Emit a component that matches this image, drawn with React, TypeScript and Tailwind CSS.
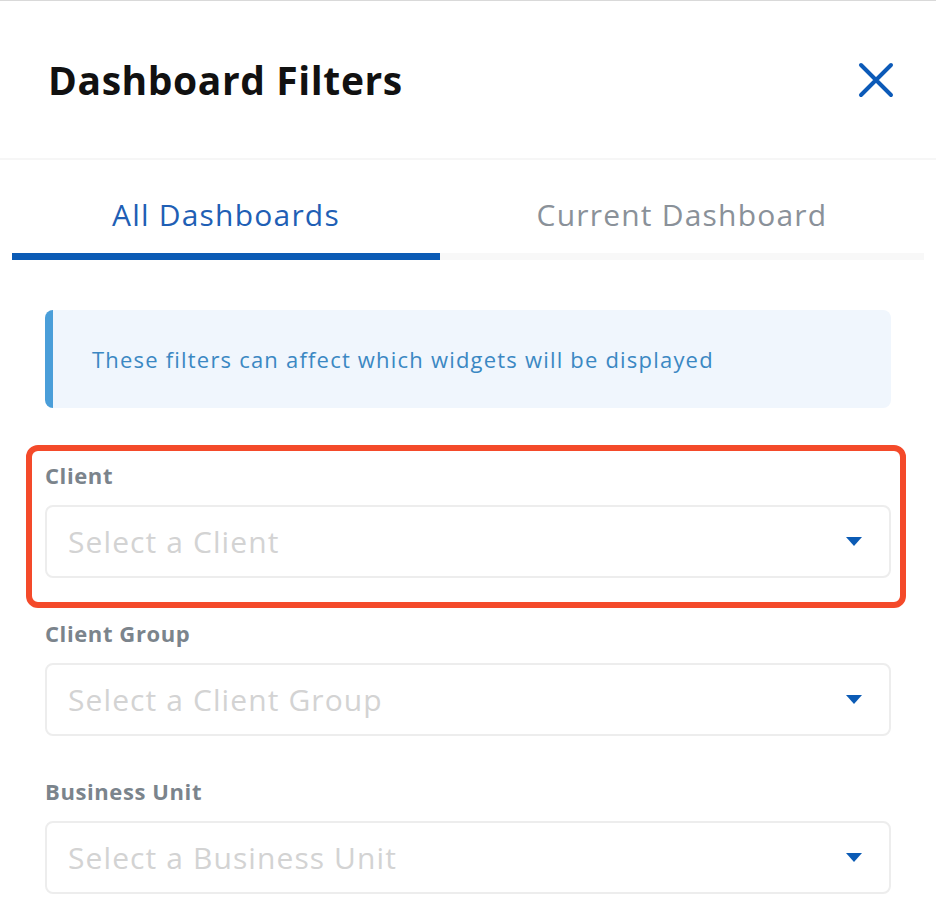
import { useState } from "react";

type Field = { label: string; placeholder: string; highlighted?: boolean };

const fields: Field[] = [
  { label: "Client", placeholder: "Select a Client", highlighted: true },
  { label: "Client Group", placeholder: "Select a Client Group" },
  { label: "Business Unit", placeholder: "Select a Business Unit" },
];

function CloseIcon() {
  return (
    <svg width="36" height="36" viewBox="0 0 36 36" fill="none">
      <path
        d="M3 3L33 33M33 3L3 33"
        stroke="#0c5ab8"
        strokeWidth="4"
        strokeLinecap="round"
      />
    </svg>
  );
}

function Caret() {
  return (
    <svg width="16" height="9" viewBox="0 0 16 9">
      <path d="M0 0H16L8 9Z" fill="#0b5bb5" />
    </svg>
  );
}

function SelectField({ field }: { field: Field }) {
  return (
    <div className="relative">
      {field.highlighted && (
        <div className="pointer-events-none absolute -left-[19px] -right-[15px] -top-[15px] -bottom-[30px] rounded-xl border-[6px] border-[#f44a2a]" />
      )}
      <label className="block text-[22px] leading-[30px] font-bold tracking-[0.6px] text-[#7b848c]">
        {field.label}
      </label>
      <button className="mt-[15px] flex h-[73px] w-full items-center justify-between rounded-lg border-2 border-[#ededed] bg-white pl-[21px] pr-[27px] text-left">
        <span className="text-[30px] leading-[40px] tracking-[1.1px] text-[#d3d3d3]">
          {field.placeholder}
        </span>
        <Caret />
      </button>
    </div>
  );
}

export default function App() {
  const [tab, setTab] = useState(0);
  const tabs = ["All Dashboards", "Current Dashboard"];

  return (
    <div
      className="min-h-[922px] w-[936px] bg-white border-t border-[#d9d9d9]"
      style={{ fontFamily: "'Open Sans', Lato, sans-serif" }}
    >
      {/* Header */}
      <div className="flex h-[159px] items-center justify-between pl-12 pr-[42px] border-b-2 border-[#f6f6f6]">
        <h1 className="text-[39px] leading-[50px] font-bold tracking-[0.6px] text-[#111]">
          Dashboard Filters
        </h1>
        <button className="p-0">
          <CloseIcon />
        </button>
      </div>

      {/* Tabs */}
      <div className="flex px-3">
        {tabs.map((t, i) => (
          <button
            key={t}
            onClick={() => setTab(i)}
            className={
              (i === 0 ? "w-[428px] " : "flex-1 ") +
              "flex h-[100px] flex-col items-center justify-end"
            }
          >
            <span
              className={
                "text-[30px] leading-[40px] tracking-[1.2px] mb-[18px] " +
                (tab === i ? "text-[#1f5fb5]" : "text-[#8a9199]")
              }
            >
              {t}
            </span>
            <span
              className={
                "block h-[7px] w-full " +
                (tab === i ? "bg-[#0b5bb5]" : "bg-[#f8f8f8]")
              }
            />
          </button>
        ))}
      </div>

      <div className="px-[45px] pt-[50px]">
        {/* Info notice */}
        <div className="flex h-[98px] items-center rounded-lg border-l-[8px] border-[#4a9ed9] bg-[#f0f6fd] pl-[39px]">
          <p className="text-[22px] leading-[30px] tracking-[1.2px] text-[#3b88c3]">
            These filters can affect which widgets will be displayed
          </p>
        </div>

        <div className="mt-[52px] flex flex-col gap-[40px]">
          {fields.map((f) => (
            <SelectField key={f.label} field={f} />
          ))}
        </div>
      </div>
    </div>
  );
}
